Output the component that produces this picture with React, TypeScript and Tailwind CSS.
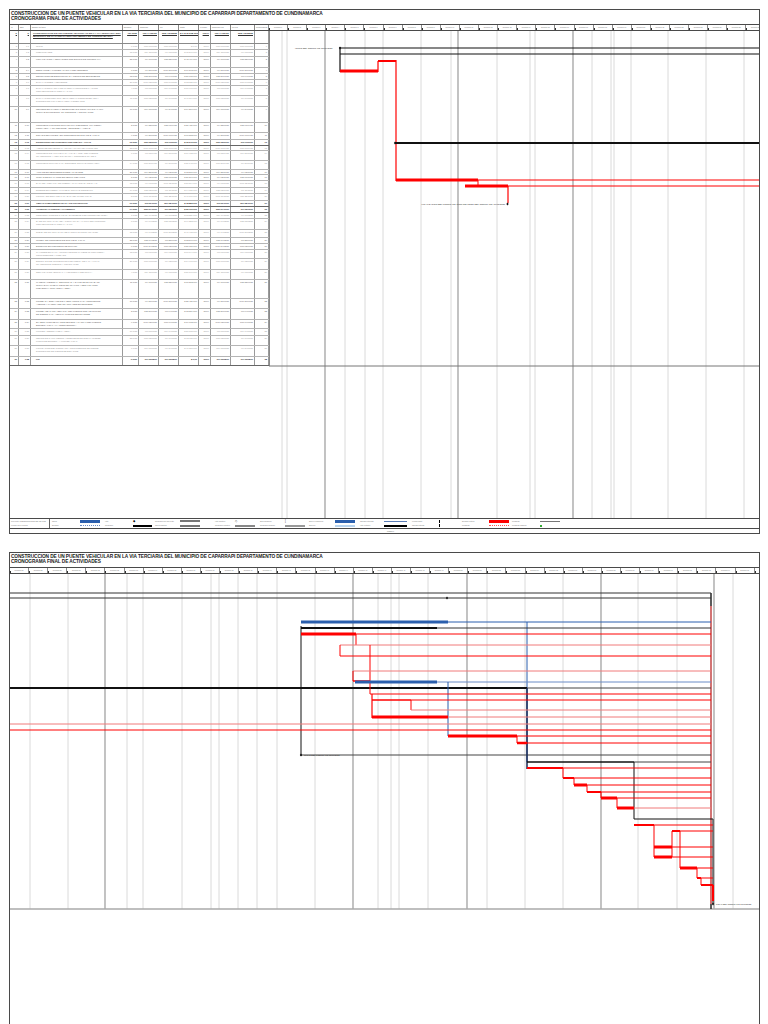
import React from 'react';

const R = '#ff0000';
const P = '#f07a7a';
const B = '#2b5fad';
const K = '#111111';

const COLW = ['w-[9px]', 'w-[12px]', 'w-[92px]', 'w-[16px]', 'w-[20px]', 'w-[20px]', 'w-[20px]', 'w-[12px]', 'w-[20px]', 'w-[24px]', 'w-[14px]'];
const HEAD = ['Id', 'EDT', 'Nombre de tarea', 'Duración', 'Comienzo', 'Fin', 'Costo', '% compl.', 'Comienzo real', 'Fin real', 'Predecesoras'];

// [height class, task name, 0 normal / 1 dark / 2 bold]
const ROWS: [string, string, number][] = [
    ['h-[6px]', 'INICIO', 0],
    ['h-[7px]', 'PRELIMINARES', 0],
    ['h-[11px]', 'LOCALIZACION Y REPLANTEO CON EQUIPO DE TOPOGRAFIA', 1],
    ['h-[6px]', 'DESCAPOTE Y LIMPIEZA MANUAL DEL TERRENO', 1],
    ['h-[6px]', 'DEMOLICION DE ESTRUCTURAS Y RETIRO DE ESCOMBROS', 1],
    ['h-[6px]', 'EXCAVACIONES Y RELLENOS', 0],
    ['h-[10px]', 'EXCAVACION MANUAL EN MATERIAL COMUN DE 0 A 2 MTS\nCON RETIRO DE MATERIAL A 5 KM', 0],
    ['h-[11px]', 'EXCAVACION MECANICA EN MATERIAL CONGLOMERADO Y\nDISPOSICION FINAL DE MATERIAL SOBRANTE', 0],
    ['h-[16px]', 'RELLENO EN MATERIAL SELECCIONADO COMPACTADO AL 95%\nINCLUYE SUMINISTRO, TRANSPORTE Y COLOCACION', 1],
    ['h-[10px]', 'CONCRETO CICLOPEO 3000 PSI 60% CONCRETO 40% PIEDRA\nFORMALETA Y TRANSPORTE - ESTRIBOS Y ALETAS', 1],
    ['h-[7px]', 'SOLADO DE LIMPIEZA EN CONCRETO DE 2000 PSI E=0.05 M', 1],
    ['h-[6px]', 'ESTRUCTURA EN CONCRETO REFORZADO - VIGAS', 2],
    ['h-[5px]', 'ACERO DE REFUERZO FY 420 MPA (60.000 PSI) FIGURADO', 0],
    ['h-[10px]', 'CONCRETO DE 4000 PSI PARA VIGAS Y LOSA DEL PUENTE\nTRANSPORTE Y VIBRADO (28 MPA) CONCRETO CLASE C', 0],
    ['h-[9px]', 'CONCRETO 3000 PSI PARA ESTRIBOS INCLUYE FORMALETA', 0],
    ['h-[5px]', 'APOYOS EN NEOPRENO DUREZA 60 SHORE', 1],
    ['h-[6px]', 'JUNTAS DE DILATACION EN PERFIL METALICO', 1],
    ['h-[7px]', 'BARANDA METALICA EN TUBERIA GALVANIZADA DE 3" Y 2"', 0],
    ['h-[6px]', 'DRENES EN TUBERIA PVC DE 3" INCLUYE GEOTEXTIL', 0],
    ['h-[7px]', 'PINTURA EN ESMALTE PARA BARANDAS METALICAS', 0],
    ['h-[6px]', 'OBRAS COMPLEMENTARIAS Y DE PROTECCION', 2],
    ['h-[6px]', 'ACCESOS AL PUENTE Y PAVIMENTO', 2],
    ['h-[6px]', 'CONFORMACION DE CALZADA EXISTENTE CON MOTONIVELADORA', 0],
    ['h-[11px]', 'BASE GRANULAR CLASE A COMPACTADA AL 100% DEL PROCTOR\nCON RETIRO DE MATERIAL A 5 KM', 0],
    ['h-[8px]', 'SUB BASE GRANULAR CLASE C INCLUYE COMPACTACION', 0],
    ['h-[6px]', 'CUNETA EN CONCRETO DE 3000 PSI E=0.10 M', 1],
    ['h-[6px]', 'BORDILLO EN CONCRETO DE 3000 PSI', 1],
    ['h-[9px]', 'GAVIONES EN MALLA TRIPLE TORSION CALIBRE 12 CON PIEDRA\nCOMPONENTES Y LLENADO', 0],
    ['h-[11px]', 'ENROCADO DE PROTECCION CON PIEDRA DE 0.40 A 0.60 M\nTRANSPORTE INTERNO Y COLOCACION', 0],
    ['h-[10px]', 'SEÑALIZACION VERTICAL Y HORIZONTAL DEFINITIVA', 0],
    ['h-[19px]', 'MANEJO AMBIENTAL, SEGURIDAD Y SALUD EN EL TRABAJO,\nINCLUYE PLAN DE MANEJO DE TRAFICO Y SEÑALIZACION\nPREVENTIVA DURANTE LA OBRA', 1],
    ['h-[10px]', 'PRUEBAS Y ENSAYOS DE LABORATORIO PARA CONCRETOS,\nACEROS Y MATERIALES GRANULARES EN ESTRIBOS', 1],
    ['h-[11px]', 'PRUEBA DE CARGA ESTATICA DEL PUENTE CON VEHICULOS\nDE DISEÑO PARA VERIFICACION DE DEFLEXIONES', 1],
    ['h-[9px]', 'ELABORACION DE PLANOS RECORD Y MANUAL DEL PUENTE\nENTREGA FINAL A LA INTERVENTORIA', 1],
    ['h-[7px]', 'LIMPIEZA GENERAL DE LA OBRA', 0],
    ['h-[10px]', 'RETIRO DE CAMPAMENTO Y DESMONTE DE INSTALACIONES\nPUNTO DE ENTREGA Y LIMPIEZA FINAL', 0],
    ['h-[11px]', 'LIQUIDACION DEL CONTRATO Y DOCUMENTOS DE CIERRE\nDISPOSICION DE CIERRE DE ESPACIOS', 0],
    ['h-[9px]', 'FIN', 2],
];

const DAYS = ['lun', 'mar', 'mié', 'jue', 'vie', 'sáb', 'dom'];
const pad = (n: number) => (n < 10 ? `0${n}` : `${n}`);
const date = (i: number, k: number) => `${DAYS[(i + k) % 7]} ${pad(((i * 5 + k * 3) % 28) + 1)}/${pad(6 + Math.floor((i + k) / 4) % 7)}/21`;

function values(i: number, name: string): string[] {
    if (name === 'INICIO' || name === 'FIN') return [`${i + 1}`, `1.${i}`, name, '0 días', date(i, 0), date(i, 0), '$ 0,00', '100%', date(i, 0), date(i, 0), `${i}`];
    return [
        `${i + 1}`,
        `1.${i}`,
        name,
        `${((i * 7) % 23) + 1} días`,
        date(i, 0),
        date(i, 2),
        `$ ${((i * 37 + 11) % 90) + 10}.${((i * 123) % 900) + 100}.000`,
        '100%',
        date(i, 0),
        date(i, 2),
        `${i}`,
    ];
}

const HEADER_TITLE = 'CONSTRUCCION DE UN PUENTE VEHICULAR EN LA VIA TERCIARIA DEL MUNICIPIO DE CAPARRAPI DEPARTAMENTO DE CUNDINAMARCA';

type Seg = [number, number, number, number, string, number];

function Lines({ segs }: { segs: Seg[] }) {
    return (
        <>
            {segs.map(([x1, y1, x2, y2, c, w], i) => (
                <line key={i} x1={x1} y1={y1} x2={x2} y2={y2} stroke={c} strokeWidth={w} />
            ))}
        </>
    );
}

function Diamond({ x, y }: { x: number; y: number }) {
    return <polygon points={`${x},${y - 1.6} ${x + 1.2},${y} ${x},${y + 1.6} ${x - 1.2},${y}`} fill={K} />;
}

function Title() {
    return (
        <div className="h-[15px] shrink-0 border-b border-[#4a4a4a] pl-[1px] pt-[1px] text-[4.8px] leading-[5px] font-bold tracking-[-0.1px] text-[#222]">
            <div>{HEADER_TITLE}</div>
            <div>CRONOGRAMA FINAL DE ACTIVIDADES</div>
        </div>
    );
}

function Weeks({ n, start }: { n: number; start: number }) {
    return (
        <div className="flex-1 flex overflow-hidden">
            {Array.from({ length: n }, (_, i) => (
                <div
                    key={i}
                    className="relative w-[19.1px] shrink-0 border-r border-[#8a8a8a] text-center text-[1.8px] leading-[5px] text-[#777]"
                >
                    semana {start + i}
                    <span className="absolute left-0 bottom-0 h-[2px] w-px bg-[#333]" />
                </div>
            ))}
        </div>
    );
}

function TaskTable() {
    return (
        <div className="w-[259px] shrink-0 flex flex-col">
            {/* project summary row */}
            <div className="h-[13px] flex border-b border-[#8a8a8a]">
                {[
                    '0', '0', HEADER_TITLE, '431 días', 'lun 14/06/21', 'mar 16/08/22', '$ 1.542.318.000', '100%', 'lun 14/06/21', 'mar 16/08/22', '',
                ].map((v, c) => (
                    <div
                        key={c}
                        className={`${COLW[c]} shrink-0 border-r border-[#9a9a9a] overflow-hidden pt-[0.5px] text-[2.5px] leading-[3px] font-bold underline text-[#333] ${c === 2 ? 'whitespace-normal pl-[2px] pr-[1px]' : 'whitespace-nowrap text-right px-[1px]'}`}
                    >
                        {v}
                    </div>
                ))}
            </div>
            {ROWS.map(([h, name, tone], i) => {
                const vals = values(i + 1, name);
                const tc = tone === 2 ? 'font-bold text-[#333]' : tone === 1 ? 'text-[#666]' : 'text-[#9a9a9a]';
                return (
                    <div key={i} className={`${h} flex border-b ${tone === 2 ? 'border-[#666]' : 'border-[#b5b5b5]'}`}>
                        {vals.map((v, c) => (
                            <div
                                key={c}
                                className={`${COLW[c]} shrink-0 border-r border-[#9a9a9a] overflow-hidden pt-[1px] text-[2.2px] leading-[3.2px] ${tc} ${c === 2 ? 'whitespace-pre-line pl-[5px] pr-[1px]' : 'whitespace-nowrap text-right px-[1px]'}`}
                            >
                                {v}
                            </div>
                        ))}
                    </div>
                );
            })}
        </div>
    );
}

const G1_LIGHT = [282, 287, 345, 365, 383, 421, 451, 497, 530, 535, 592, 611, 614, 631, 668, 706, 744];
const G1_DARK = [325, 458, 573];

const P1_BARS: Seg[] = [
    [269, 366, 759, 366, '#777', 1],
    [340, 48, 759, 48, K, 1.2],
    [340, 54, 759, 54, K, 1.2],
    [340, 47, 340, 72, K, 1.2],
    [340, 71, 378, 71, R, 3],
    [378, 61, 378, 72, R, 1.2],
    [378, 61, 396, 61, R, 2],
    [396, 60, 396, 181, R, 1.2],
    [395, 143, 759, 143, K, 2],
    [396, 180, 478, 180, R, 3],
    [478, 180, 759, 180, R, 1],
    [478, 180, 478, 186, R, 1],
    [465, 186, 508, 186, R, 3],
    [508, 186, 759, 186, R, 1],
    [508, 186, 508, 203, R, 1.2],
];

function GanttOne() {
    return (
        <svg width={490} height={487} viewBox="269 31 490 487" className="shrink-0 block">
            {G1_LIGHT.map((x) => (
                <line key={x} x1={x} y1={31} x2={x} y2={518} stroke="#dadada" strokeWidth={1} />
            ))}
            {G1_DARK.map((x) => (
                <line key={x} x1={x} y1={31} x2={x} y2={518} stroke="#9a9a9a" strokeWidth={1.2} />
            ))}
            <line x1={269.5} y1={31} x2={269.5} y2={366} stroke="#8a8a8a" strokeWidth={1} />
            <Lines segs={P1_BARS} />
            <Diamond x={340} y={48} />
            <Diamond x={395} y={143} />
            <Diamond x={507.5} y={204} />
            <text x={295} y={48.8} fontSize={2.3} fill="#333" fontFamily="Liberation Sans, Arial, sans-serif">
                INICIO DEL CONTRATO 15/06/2021
            </text>
            <text x={505} y={205} fontSize={2.3} fill="#333" textAnchor="end" fontFamily="Liberation Sans, Arial, sans-serif">
                FINALIZACION DEL CONTRATO (CON REVISION DEL CONTRATO) 16/08/2021
            </text>
        </svg>
    );
}

const G2_LIGHT = [30, 68, 127, 143, 182, 211, 219, 238, 257, 277, 315, 378, 391, 399, 428, 487, 525, 563, 638, 677, 733];
const G2_DARK = [105, 353, 467, 601, 714];

const P2_BARS: Seg[] = [
    [10, 908, 759, 908, '#aaa', 1.5],
    [10, 592, 711, 592, '#333', 1],
    [10, 597, 711, 597, '#333', 1.2],
    [711, 592, 711, 908, '#333', 1.6],
    [711, 605, 711, 903, P, 1.6],
    // blue summary bar
    [301, 621, 448, 621, B, 3],
    [448, 621, 711, 621, B, 1],
    [527, 621, 527, 761, B, 1],
    // black
    [301, 627, 437, 627, K, 2],
    [437, 627, 711, 627, '#333', 1],
    [301, 625, 301, 755, K, 1],
    [301, 754, 711, 754, '#444', 1.2],
    [10, 687, 527, 687, K, 2],
    [527, 687, 711, 687, '#444', 1],
    [527, 687, 527, 768, '#1a2a55', 1.5],
    [527, 761, 634, 761, K, 1.6],
    [634, 761, 711, 761, '#444', 1],
    [634, 761, 634, 818, K, 1],
    [634, 818, 713, 818, K, 1],
    [713, 818, 713, 903, '#333', 1.2],
    // red chain
    [301, 633, 356, 633, R, 3],
    [356, 633, 711, 633, R, 1],
    [356, 633, 356, 644, R, 1],
    [340, 644, 711, 644, P, 1],
    [340, 644, 340, 655, R, 1],
    [340, 655, 711, 655, R, 1],
    [370, 644, 370, 693, R, 1],
    [353, 670, 711, 670, P, 1],
    [353, 670, 353, 680, R, 1],
    [353, 680, 370, 680, R, 1.5],
    [355, 681, 437, 681, B, 3],
    [437, 681, 711, 681, '#6a8cc6', 1],
    [448, 681, 448, 735, B, 1],
    [370, 693, 711, 693, R, 1],
    [372, 693, 372, 717, R, 1.2],
    [372, 699, 411, 699, R, 1.5],
    [411, 699, 711, 699, R, 1],
    [411, 699, 411, 709, R, 1],
    [411, 709, 711, 709, P, 1],
    [372, 716, 448, 716, R, 3],
    [448, 716, 711, 716, P, 1],
    [10, 723, 711, 723, P, 1],
    [10, 729, 711, 729, R, 1],
    [448, 735, 517, 735, R, 3],
    [517, 735, 711, 735, R, 1],
    [517, 735, 517, 742, R, 1],
    [517, 742, 527, 742, R, 2.5],
    [527, 742, 711, 742, R, 1],
    [527, 767, 563, 767, R, 2],
    [563, 767, 711, 767, R, 1],
    [563, 767, 563, 777, R, 1],
    [563, 777, 574, 777, R, 2],
    [574, 777, 711, 777, R, 1],
    [574, 777, 574, 784, R, 1],
    [574, 784, 587, 784, R, 3],
    [587, 784, 711, 784, R, 1],
    [587, 784, 587, 791, R, 1],
    [587, 791, 601, 791, R, 2],
    [601, 791, 711, 791, R, 1],
    [601, 791, 601, 797, R, 1],
    [601, 797, 617, 797, R, 3],
    [617, 797, 711, 797, R, 1],
    [617, 797, 617, 807, R, 1],
    [617, 807, 634, 807, R, 3],
    [634, 807, 711, 807, P, 1],
    [634, 824, 654, 824, R, 2],
    [654, 824, 713, 824, R, 1],
    [654, 824, 654, 856, R, 1],
    [672, 830, 680, 830, R, 2],
    [680, 830, 713, 830, R, 1],
    [672, 830, 672, 856, R, 1],
    [680, 830, 680, 867, R, 1],
    [654, 846, 672, 846, R, 3],
    [672, 846, 713, 846, R, 1],
    [654, 856, 672, 856, R, 3],
    [672, 856, 713, 856, R, 1],
    [680, 867, 697, 867, R, 3],
    [697, 867, 713, 867, R, 1],
    [697, 867, 697, 877, R, 1],
    [697, 877, 701, 877, R, 2],
    [701, 877, 713, 877, R, 1],
    [701, 877, 701, 884, R, 1],
    [701, 884, 713, 884, R, 2],
    [713, 884, 713, 900, R, 2],
];

function GanttTwo() {
    return (
        <svg width={749} height={451} viewBox="10 573 749 451" className="block">
            {G2_LIGHT.map((x) => (
                <line key={x} x1={x} y1={573} x2={x} y2={908} stroke="#dadada" strokeWidth={1} />
            ))}
            {G2_DARK.map((x) => (
                <line key={x} x1={x} y1={573} x2={x} y2={908} stroke="#9a9a9a" strokeWidth={1.2} />
            ))}
            <Lines segs={P2_BARS} />
            <Diamond x={447} y={597} />
            <Diamond x={301} y={754} />
            <Diamond x={713} y={903} />
            <text x={304} y={755} fontSize={2.2} fill="#333" fontFamily="Liberation Sans, Arial, sans-serif">
                INICIO DEL CONTRATO 15/06/2021
            </text>
            <text x={716} y={904} fontSize={2.2} fill="#333" fontFamily="Liberation Sans, Arial, sans-serif">
                FINAL DEL CONTRATO 16/08/2022
            </text>
        </svg>
    );
}

function LegendText({ t, b, w }: { t: string; b: string; w: string }) {
    return (
        <div className={`${w} shrink-0 flex flex-col justify-center gap-[1.5px] pl-[2px] text-[1.9px] leading-[2.5px] text-[#777] whitespace-nowrap overflow-hidden`}>
            <span>{t}</span>
            <span>{b}</span>
        </div>
    );
}

function LegendBars({ t, b, w }: { t: React.ReactNode; b: React.ReactNode; w: string }) {
    return (
        <div className={`${w} shrink-0 flex flex-col justify-center gap-[1.5px]`}>
            <div className="h-[3px] flex items-center">{t}</div>
            <div className="h-[3px] flex items-center">{b}</div>
        </div>
    );
}

function Legend() {
    return (
        <div className="h-[10px] shrink-0 flex border-t border-[#4a4a4a]">
            <div className="w-[40px] shrink-0 border-r border-[#666] flex flex-col justify-center gap-[1.5px] pl-[1px] text-[1.9px] leading-[2.5px] text-[#777] whitespace-nowrap overflow-hidden">
                <span>Proyecto: CONSTRUCCION DE UN PUE</span>
                <span>Fecha: lun 14/06/21</span>
            </div>
            <LegendText w="w-[30px]" t="Tarea" b="División" />
            <LegendBars w="w-[23px]" t={<div className="h-[2.5px] w-[20px] bg-[#2b5fad]" />} b={<div className="h-px w-[20px] border-t border-dotted border-[#6a8cc6]" />} />
            <LegendText w="w-[30px]" t="Hito" b="Resumen" />
            <LegendBars w="w-[20px]" t={<span className="text-[3px] leading-none text-black">◆</span>} b={<div className="h-[2px] w-[19px] bg-black" />} />
            <LegendText w="w-[27px]" t="Resumen del proyecto" b="Tarea inactiva" />
            <LegendBars w="w-[33px]" t={<div className="h-[2px] w-[20px] border-y border-[#777]" />} b={<div className="h-[2.5px] w-[20px] bg-[#777]" />} />
            <LegendText w="w-[22px]" t="Hito inactivo" b="Resumen inactivo" />
            <LegendBars w="w-[23px]" t={<span className="text-[3px] leading-none text-black">◇</span>} b={<div className="h-[2px] w-[20px] border border-[#888]" />} />
            <LegendText w="w-[27px]" t="Solo duración" b="Resumen manual" />
            <LegendBars w="w-[22px]" t={<span className="text-[3px] leading-none text-[#333]">[</span>} b={<div className="h-[1.5px] w-[20px] bg-[#999]" />} />
            <LegendText w="w-[28px]" t="Solo el comienzo" b="Solo fin" />
            <LegendBars w="w-[23px]" t={<div className="h-[2.5px] w-[20px] bg-[#2b5fad]" />} b={<div className="h-[2px] w-[20px] bg-[#b8d4ef]" />} />
            <LegendText w="w-[26px]" t="Tareas externas" b="Hito externo" />
            <LegendBars w="w-[26px]" t={<div className="h-[1.5px] w-[23px] bg-[#5a7cb5]" />} b={<div className="h-[2px] w-[23px] bg-black" />} />
            <LegendText w="w-[29px]" t="Fecha límite" b="Tareas críticas" />
            <LegendBars w="w-[21px]" t={<div className="h-[3px] w-px bg-black" />} b={<div className="h-[3px] w-px bg-black" />} />
            <LegendText w="w-[29px]" t="División crítica" b="Progreso" />
            <LegendBars w="w-[21px]" t={<div className="h-[3px] w-[20px] bg-[#ff0000]" />} b={<div className="h-px w-[20px] border-t border-dotted border-[#ff5555]" />} />
            <LegendText w="w-[30px]" t="Progreso" b="Progreso manual" />
            <LegendBars w="w-[24px]" t={<div className="h-px w-[20px] bg-[#777]" />} b={<div className="h-[1.5px] w-[1.5px] bg-[#3a3]" />} />
        </div>
    );
}

function PageOne() {
    return (
        <div className="w-[751px] h-[525px] border border-[#4a4a4a] flex flex-col">
            <Title />
            <div className="h-[6px] shrink-0 flex border-b border-[#4a4a4a]">
                <div className="w-[259px] shrink-0 flex">
                    {HEAD.map((h, c) => (
                        <div
                            key={c}
                            className={`${COLW[c]} shrink-0 border-r border-[#8a8a8a] overflow-hidden whitespace-nowrap px-[1px] text-[1.8px] leading-[5px] text-[#666]`}
                        >
                            {h}
                        </div>
                    ))}
                </div>
                <Weeks n={26} start={1} />
            </div>
            <div className="h-[487px] shrink-0 flex">
                <TaskTable />
                <GanttOne />
            </div>
            <Legend />
            <div className="h-[5px] shrink-0 border-t border-[#4a4a4a] pl-[12px] text-center text-[1.8px] leading-[4px] text-[#666]">
                Página 1
            </div>
        </div>
    );
}

function PageTwo() {
    return (
        <div className="mt-[18px] w-[751px] h-[480px] border border-[#4a4a4a] flex flex-col">
            <Title />
            <div className="h-[6px] shrink-0 flex border-b border-[#4a4a4a]">
                <Weeks n={40} start={27} />
            </div>
            <GanttTwo />
        </div>
    );
}

export default function App() {
    return (
        <div className="w-[768px] h-[1024px] overflow-hidden bg-white pl-[9px] pt-[9px] font-['Liberation_Sans',Arial,sans-serif]">
            <PageOne />
            <PageTwo />
        </div>
    );
}
